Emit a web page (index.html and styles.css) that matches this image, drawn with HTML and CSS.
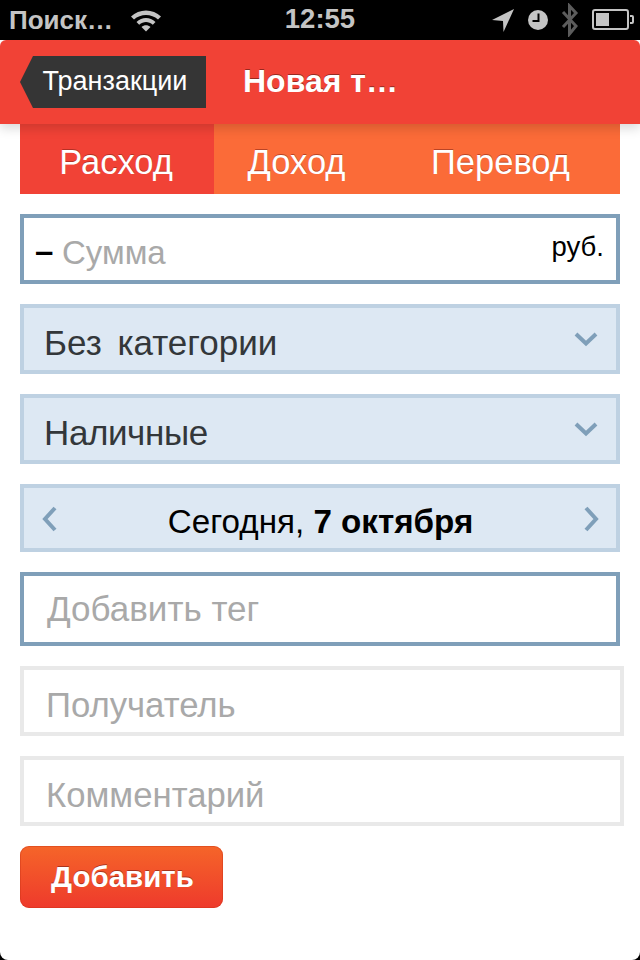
FILE: index.html
```html
<!DOCTYPE html>
<html lang="ru">
<head>
  <meta charset="UTF-8">
  <meta name="viewport" content="width=device-width, initial-scale=1.0">
  <title>Новая транзакция</title>
  <link rel="stylesheet" href="styles.css">
</head>

<body>
  <div class="status-bar">
    <div class="status-left">
      <span class="carrier">Поиск…</span>
      <svg class="icon-wifi" width="32" height="24" viewBox="0 0 32 24">
        <path d="M1 8.500C9 0.500 23 0.500 31 8.500L28 11.500C21.500 5.500 10.500 5.500 4 11.500Z" fill="#c4c4c4"/>
        <path d="M6.500 14C12 8.500 20 8.500 25.500 14L22.800 16.800C18.500 13 13.500 13 9.200 16.800Z" fill="#c4c4c4"/>
        <path d="M11.500 19C14 16.500 18 16.500 20.500 19L16 23.500Z" fill="#c4c4c4"/>
      </svg>
    </div>
    <span class="clock">12:55</span>
    <div class="status-right">
      <svg width="24" height="24" viewBox="0 0 24 24"><path d="M23 1L1 12L12 13L12.500 24Z" fill="#c4c4c4"/></svg>
      <svg width="20" height="20" viewBox="0 0 20 20"><circle cx="10" cy="10" r="10" fill="#c4c4c4"/><path d="M10.500 3.500V11H4.500" fill="none" stroke="#000" stroke-width="2"/></svg>
      <svg width="18" height="34" viewBox="0 0 18 34"><path d="M2 9L15 23L8.500 31V3L15 10L2 24" fill="none" stroke="#5c5c5c" stroke-width="3"/></svg>
      <svg width="42" height="22" viewBox="0 0 42 22"><rect x="1" y="1" width="35" height="19" rx="2" fill="none" stroke="#c4c4c4" stroke-width="2"/><rect x="4" y="4" width="13" height="13" fill="#c4c4c4"/><path d="M38 7h2a1 1 0 0 1 1 1v5a1 1 0 0 1-1 1h-2" fill="none" stroke="#c4c4c4" stroke-width="2"/></svg>
    </div>
  </div>

  <header class="nav-bar">
    <a class="back-btn">Транзакции</a>
    <h1 class="nav-title">Новая т…</h1>
  </header>

  <main class="content">
    <div class="tabs">
      <div class="tab tab-active">Расход</div>
      <div class="tab tab-income">Доход</div>
      <div class="tab tab-transfer">Перевод</div>
    </div>

    <div class="field field-amount">
      <span class="minus">–</span>
      <span class="placeholder">Сумма</span>
      <span class="currency">руб.</span>
    </div>

    <div class="field field-select">
      <span class="select-wide">Без категории</span>
      <svg class="chevron" width="24" height="16" viewBox="0 0 24 16"><path d="M2 3L12 12.500L22 3" fill="none" stroke="#7f9fb9" stroke-width="4"/></svg>
    </div>

    <div class="field field-select">
      <span class="select-tight">Наличные</span>
      <svg class="chevron" width="24" height="16" viewBox="0 0 24 16"><path d="M2 3L12 12.500L22 3" fill="none" stroke="#7f9fb9" stroke-width="4"/></svg>
    </div>

    <div class="field field-date">
      <svg class="date-arrow" width="16" height="26" viewBox="0 0 16 26"><path d="M13 2L3 13L13 24" fill="none" stroke="#7f9fb9" stroke-width="4"/></svg>
      <span class="date-text">Сегодня, <b>7 октября</b></span>
      <svg class="date-arrow" width="16" height="26" viewBox="0 0 16 26"><path d="M3 2L13 13L3 24" fill="none" stroke="#7f9fb9" stroke-width="4"/></svg>
    </div>

    <div class="field field-tag"><span class="placeholder">Добавить тег</span></div>
    <div class="field field-plain"><span class="placeholder">Получатель</span></div>
    <div class="field field-plain"><span class="placeholder">Комментарий</span></div>

    <button class="btn-add">Добавить</button>
  </main>
</body>
</html>
```

FILE: styles.css
```css
html {
  background-color: #000;
}

body {
  width: 640px;
  height: 960px;
  margin: 0;
  overflow: hidden;
  background-color: #fff;
  border-radius: 0 0 8px 8px;
  font-family: "Liberation Sans", Arial, sans-serif;
}

.status-bar {
  height: 40px;
  background-color: #000;
  color: #c4c4c4;
  display: flex;
  align-items: center;
  justify-content: space-between;
  padding: 0 6px 0 9px;
  box-sizing: border-box;
  position: relative;
}

.status-left {
  display: flex;
  align-items: center;
  gap: 17px;
}

.carrier {
  font-size: 26px;
  font-weight: bold;
}

.clock {
  position: absolute;
  left: 0;
  right: 0;
  top: 2px;
  text-align: center;
  font-size: 27.5px;
  font-weight: bold;
  line-height: 34px;
}

.status-right {
  display: flex;
  align-items: center;
  gap: 13px;
}

.nav-bar {
  height: 84px;
  background-color: #f14236;
  border-radius: 6px 6px 0 0;
  display: flex;
  align-items: center;
  padding-left: 20px;
  box-sizing: border-box;
  box-shadow: 0 4px 12px rgba(0, 0, 0, 0.16);
  position: relative;
}

.back-btn {
  width: 186px;
  height: 52px;
  background-color: #353535;
  color: #fff;
  font-size: 27px;
  line-height: 50px;
  text-align: center;
  padding-left: 4px;
  box-sizing: border-box;
  clip-path: polygon(13px 0, 100% 0, 100% 100%, 13px 100%, 0 50%);
}

.nav-title {
  margin: 0 0 2px 37px;
  color: #fff;
  font-size: 32px;
  font-weight: bold;
  text-shadow: 0 -1px 0 rgba(0, 0, 0, 0.4);
}

.content {
  padding: 0 16px 0 20px;
  display: flex;
  flex-direction: column;
  align-items: flex-start;
}

.tabs {
  width: 600px;
  height: 70px;
  display: flex;
  background-color: #fb6b38;
  color: #fff;
  font-size: 34.5px;
  margin-bottom: 20px;
}

.tab {
  line-height: 76px;
  text-align: center;
  text-shadow: 0 -1px 0 rgba(120, 30, 20, 0.5);
}

.tab-active {
  width: 194px;
  background-color: #f14236;
  padding-right: 2px;
  box-sizing: border-box;
}

.tab-income {
  width: 165px;
}

.tab-transfer {
  flex: 1;
  padding-left: 2px;
}

.field {
  width: 600px;
  height: 70px;
  box-sizing: border-box;
  border: 4px solid #7f9fb9;
  margin-bottom: 20px;
  display: flex;
  align-items: center;
  font-size: 35px;
  background-color: #fff;
}

.placeholder {
  color: #a9a9a9;
}

.field-amount {
  padding: 8px 12px 0 11px;
  font-size: 33px;
}

.minus {
  color: #000;
  font-weight: bold;
  width: 27px;
  margin-top: -4px;
}

.currency {
  margin: -12px 0 0 auto;
  font-size: 27.5px;
  color: #000;
}

.field-select {
  border-color: #bed1e2;
  background-color: #dde8f3;
  color: #33373a;
  justify-content: space-between;
  padding: 8px 18px 0 20px;
}

.select-wide {
  word-spacing: 6px;
}

.select-tight {
  letter-spacing: -0.4px;
}

.chevron {
  margin-top: -9px;
}

.field-date {
  height: 68px;
  border-color: #bed1e2;
  background-color: #dde8f3;
  justify-content: space-between;
  padding: 8px 17px 0 18px;
  color: #000;
}

.date-arrow {
  margin-top: -6px;
}

.date-text {
  font-size: 33.2px;
}

.field-tag {
  height: 74px;
  padding: 0 23px;
}

.field-plain {
  width: 604px;
  border-color: #e9e9e9;
  padding: 8px 22px 0;
  font-size: 34.7px;
}

.btn-add {
  width: 203px;
  height: 62px;
  border: 0;
  border-radius: 9px;
  padding-left: 8px;
  background: linear-gradient(#f56529, #ee3a2c);
  box-shadow: inset 0 0 0 1px rgba(200, 50, 20, 0.4);
  color: #fff;
  font-family: inherit;
  font-size: 29.5px;
  font-weight: bold;
  text-shadow: 0 -1px 0 rgba(120, 30, 20, 0.6);
}
```
